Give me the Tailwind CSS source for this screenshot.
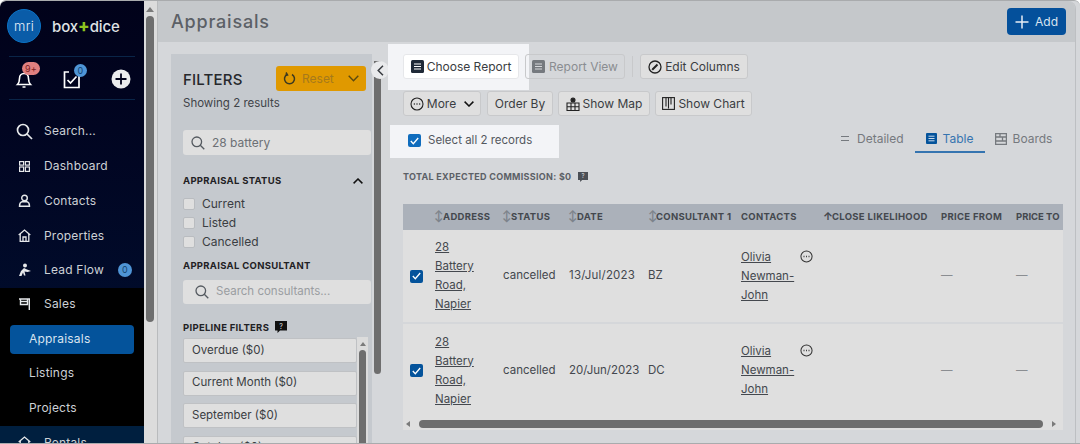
<!DOCTYPE html>
<html lang="en">
  <head>
    <meta charset="UTF-8" />
    <title>Appraisals</title>
    <script src="https://cdn.jsdelivr.net/npm/@tailwindcss/browser@4"></script>
  </head>
  <body class="bg-white font-['Inter',sans-serif] text-[#3a3d42] overflow-hidden">
    <div class="w-[1080px] h-[444px] flex overflow-hidden rounded-t-[6px] border-y border-[#a9abad] bg-[#d5d7da]">
      <!-- sidebar -->
      <nav class="w-[144px] h-[442px] shrink-0 overflow-hidden rounded-tl-[6px] bg-gradient-to-b from-[#01021a] to-[#001233] text-[#cdd1d6] text-[12px] tracking-[0.2px]">
        <div class="h-[55px] mx-[7px] pt-[8px] flex items-start">
          <div class="w-[34px] h-[34px] rounded-full bg-[#0a5ca8] border border-[#0b72c4] flex items-center justify-center text-[#e8f0f8] text-[13px] font-light leading-none">mri</div>
          <div class="ml-[11px] mt-[9px] text-[15px] leading-[18px] font-medium text-[#dfe1e4] tracking-[-0.1px] whitespace-nowrap">box<span class="text-[#8dc21f] font-extrabold text-[17px] leading-[17px]">+</span>dice</div>
        </div>
        <div class="mx-[9px] h-[44px] border-y border-[#0a2548] relative flex items-center">
          <svg class="absolute left-[6px] top-[12px] w-[18px] h-[20px]" viewBox="0 0 18 20" fill="none" stroke="#fff" stroke-width="1.6"><path d="M2.5 15.5c1.5-1.5 2-3 2-6 0-3 2-5 4.500-5s4.500 2 4.500 5c0 3 .5 4.500 2 6z"/><path d="M7.500 18h3"/></svg>
          <span class="absolute left-[13px] top-[5px] h-[13px] w-[18px] rounded-full bg-[#e08080] text-[#7d2020] text-[9px] leading-[13px] text-center">9+</span>
          <svg class="absolute left-[54px] top-[13px] w-[18px] h-[19px]" viewBox="0 0 18 19" fill="none" stroke="#fff" stroke-width="1.700"><path d="M6 2H1.500v15.500h14.500V4"/><path d="M4.500 10l3 3 6-6.500"/></svg>
          <span class="absolute left-[65px] top-[7px] h-[13px] w-[13px] rounded-full bg-[#4f95d6] text-[#14446f] text-[9px] leading-[13px] text-center">0</span>
          <svg class="absolute left-[102px] top-[12px] w-[20px] h-[20px]" viewBox="0 0 20 20"><circle cx="10" cy="10" r="9.500" fill="#eceded"/><path d="M10 4.500v11M4.500 10h11" stroke="#01021a" stroke-width="1.800"/></svg>
        </div>
        <div class="mt-[14px]">
          <a class="h-[34.750px] flex items-center pl-[16px]">
            <svg class="w-[17px] h-[17px] shrink-0" viewBox="0 0 17 17" fill="none" stroke="#e6e8ea" stroke-width="1.700"><circle cx="7" cy="7" r="5.500"/><path d="M11 11l5 5"/></svg>
            <span class="ml-[11px]">Search...</span>
          </a>
          <a class="h-[34.750px] flex items-center pl-[19px]">
            <svg class="w-[11px] h-[11px] shrink-0" viewBox="0 0 11 11" fill="none" stroke="#e6e8ea" stroke-width="1.200"><rect x=".6" y=".6" width="4" height="3.500"/><rect x="6.400" y=".6" width="4" height="3.500"/><rect x=".6" y="6" width="4" height="4.400"/><rect x="6.400" y="6" width="4" height="4.400"/></svg>
            <span class="ml-[14px]">Dashboard</span>
          </a>
          <a class="h-[34.750px] flex items-center pl-[18px]">
            <svg class="w-[13px] h-[13px] shrink-0" viewBox="0 0 13 13" fill="none" stroke="#e6e8ea" stroke-width="1.400"><circle cx="6.500" cy="4" r="2.800"/><path d="M1.500 12.200c0-3 1.500-4.200 2.500-4.500h5c1 .3 2.500 1.500 2.500 4.500z"/></svg>
            <span class="ml-[13px]">Contacts</span>
          </a>
          <a class="h-[34.750px] flex items-center pl-[18px]">
            <svg class="w-[13px] h-[13px] shrink-0" viewBox="0 0 13 13" fill="none" stroke="#e6e8ea" stroke-width="1.300"><path d="M.7 6L6.500 1l5.800 5"/><path d="M2.200 5v7.300h8.600V5"/><path d="M5 12.300V8h3v4.300"/></svg>
            <span class="ml-[13px]">Properties</span>
          </a>
          <a class="h-[34.750px] flex items-center pl-[18px]">
            <svg class="w-[14px] h-[14px] shrink-0" viewBox="0 0 14 14" fill="#e6e8ea"><circle cx="7" cy="2.500" r="2"/><path d="M1 13l2-5 3-3 3 1.500 4 1.500-3.500 1-3-.5 1 4H6l-1-3-1.500 3.500z"/></svg>
            <span class="ml-[12px]">Lead Flow</span>
            <span class="ml-[14px] w-[14px] h-[14px] rounded-full bg-[#4f95d6] text-[#14446f] text-[9px] leading-[14px] text-center">0</span>
          </a>
          <div class="bg-black h-[138px]">
            <a class="h-[32px] flex items-center pl-[19px]">
              <svg class="w-[11px] h-[12px] shrink-0" viewBox="0 0 11 12" fill="none" stroke="#e6e8ea" stroke-width="1.400"><path d="M0 1h10.300v11"/><path d="M1.500 1v5.500h7V1" /><path d="M1.500 3.500h7" /></svg>
              <span class="ml-[14px]">Sales</span>
            </a>
            <a class="h-[29px] mx-[10px] mt-[5px] pl-[19px] flex items-center rounded-[4px] bg-[#04539b] text-[#d9e4f0]">Appraisals</a>
            <a class="h-[35px] mt-[2px] pl-[29px] flex items-center">Listings</a>
            <a class="h-[34px] pl-[29px] flex items-center">Projects</a>
          </div>
          <a class="h-[34px] flex items-center pl-[18px] bg-[#001f3f]">
            <svg class="w-[13px] h-[13px] shrink-0" viewBox="0 0 13 13" fill="none" stroke="#e6e8ea" stroke-width="1.300"><path d="M.7 6L6.500 1l5.800 5"/><path d="M2.200 5v7.300h8.600V5"/></svg>
            <span class="ml-[13px]">Rentals</span>
          </a>
        </div>
      </nav>

      <!-- page scrollbar -->
      <div class="w-[14px] h-[442px] shrink-0 bg-[#dcdcdc] border-r border-[#b9bbbd] flex flex-col items-center pr-[1px]">
        <div class="mt-[6px] w-0 h-0 border-x-[4px] border-x-transparent border-b-[5px] border-b-[#7a7a7a]"></div>
        <div class="mt-[4px] w-[8px] h-[306px] rounded-full bg-[#6e6e6e]"></div>
      </div>

      <!-- main -->
      <main class="w-[918px] h-[442px] shrink-0 overflow-hidden rounded-tr-[8px] border-r border-[#bdbfc2]">
        <header class="h-[41px] bg-[#c5c8cb] flex items-center justify-between pl-[13px] pr-[9px]">
          <h1 class="text-[18px] font-medium text-[#5c6066] tracking-[0.8px]">Appraisals</h1>
          <button class="w-[59px] h-[27px] rounded-[4px] bg-[#04509b] text-[#d9e4f0] text-[12px] flex items-center justify-center gap-[6px]">
            <svg class="w-[14px] h-[14px]" viewBox="0 0 14 14" stroke="#e6edf5" stroke-width="1.500"><path d="M7 .5v13M.5 7h13"/></svg>
            Add
          </button>
        </header>

        <div class="flex">
          <!-- filters -->
          <div class="relative w-[227px] h-[401px] shrink-0 pl-[13px] pt-[12px]">
            <aside class="w-[201px] h-[389px] overflow-hidden bg-[#c5c9ce] pl-[12px]">
              <div class="flex items-start justify-between pt-[12px] pr-[6px]">
                <div class="w-[93px] whitespace-nowrap">
                  <h2 class="mt-[5px] text-[15px] leading-[18px] font-medium text-[#26282c] tracking-[0.2px]">FILTERS</h2>
                  <p class="mt-[7px] text-[11.500px] leading-[14px] text-[#3f4348]">Showing 2 results</p>
                </div>
                <button class="w-[90px] shrink-0 h-[25px] rounded-[3px] bg-[#e09900] text-[#a6791c] text-[12px] flex items-center pl-[7px] pr-[7px]">
                  <svg class="w-[13px] h-[13px] shrink-0" viewBox="0 0 13 13" fill="none" stroke="#3d3a20" stroke-width="1.500"><path d="M4 2.500a5 5 0 1 0 5 0"/><path d="M3 .5l1.500 2.500-2.500.5" /></svg>
                  <span class="ml-[6px]">Reset</span>
                  <svg class="ml-auto w-[11px] h-[7px]" viewBox="0 0 11 7" fill="none" stroke="#5c4a10" stroke-width="1.400"><path d="M.7.7l4.800 5 4.800-5"/></svg>
                </button>
              </div>
              <div class="mt-[20px] h-[25px] w-[188px] rounded-[3px] bg-[#dfdfdf] flex items-center pl-[8px] text-[12px] text-[#6c7075]">
                <svg class="w-[14px] h-[14px] shrink-0" viewBox="0 0 14 14" fill="none" stroke="#555a60" stroke-width="1.300"><circle cx="5.800" cy="5.800" r="4.800"/><path d="M9.300 9.300l4 4"/></svg>
                <span class="ml-[7px]">28 battery</span>
              </div>
              <div class="mt-[19px] flex items-center justify-between pr-[9px]">
                <h3 class="text-[9.500px] leading-[14px] font-bold text-[#1f2124] tracking-[0.3px]">APPRAISAL STATUS</h3>
                <svg class="w-[10px] h-[6px]" viewBox="0 0 10 6" fill="none" stroke="#111" stroke-width="1.500"><path d="M.6 5.400L5 1l4.400 4.400"/></svg>
              </div>
              <ul class="mt-[6px] text-[12px] text-[#3a3d42]">
                <li class="h-[19px] flex items-center gap-[7px]"><span class="w-[12px] h-[12px] rounded-[2px] bg-[#dfdfdf] border border-[#b9bcc0]"></span>Current</li>
                <li class="h-[19px] flex items-center gap-[7px]"><span class="w-[12px] h-[12px] rounded-[2px] bg-[#dfdfdf] border border-[#b9bcc0]"></span>Listed</li>
                <li class="h-[19px] flex items-center gap-[7px]"><span class="w-[12px] h-[12px] rounded-[2px] bg-[#dfdfdf] border border-[#b9bcc0]"></span>Cancelled</li>
              </ul>
              <h3 class="mt-[8px] text-[9.500px] leading-[14px] font-bold text-[#1f2124] tracking-[0.3px]">APPRAISAL CONSULTANT</h3>
              <div class="mt-[7px] h-[24px] w-[188px] rounded-[3px] bg-[#dfdfdf] flex items-center pl-[12px] text-[11.500px] text-[#9a9da1]">
                <svg class="w-[14px] h-[14px] shrink-0" viewBox="0 0 14 14" fill="none" stroke="#555a60" stroke-width="1.300"><circle cx="5.800" cy="5.800" r="4.800"/><path d="M9.300 9.300l4 4"/></svg>
                <span class="ml-[7px]">Search consultants...</span>
              </div>
              <div class="mt-[17px] flex items-center gap-[6px]">
                <h3 class="text-[9.500px] leading-[14px] font-bold text-[#1f2124] tracking-[0.3px]">PIPELINE FILTERS</h3>
                <svg class="w-[12px] h-[12px] -mt-[3px]" viewBox="0 0 12 12"><path d="M0 0h12v9.500H5L2.500 12V9.500H0z" fill="#111"/><text x="6" y="7.500" font-size="7" fill="#ddd" text-anchor="middle" font-family="Inter">?</text></svg>
              </div>
              <div class="flex mt-[3px]">
                <div class="w-[174px] shrink-0 flex flex-col gap-[7.500px] text-[11.500px] text-[#3a3d42]">
                  <button class="h-[25px] rounded-[2px] bg-[#dfdfdf] border border-[#bfc1c4] pl-[8px] text-left">Overdue ($0)</button>
                  <button class="h-[25px] rounded-[2px] bg-[#dfdfdf] border border-[#bfc1c4] pl-[8px] text-left">Current Month ($0)</button>
                  <button class="h-[25px] rounded-[2px] bg-[#dfdfdf] border border-[#bfc1c4] pl-[8px] text-left">September ($0)</button>
                  <button class="h-[25px] rounded-[2px] bg-[#dfdfdf] border border-[#bfc1c4] pl-[8px] text-left">October ($0)</button>
                </div>
                <div class="w-[11px] -mt-[1px] h-[110px] bg-[#dcdcdc] flex flex-col items-center">
                  <div class="mt-[5px] w-0 h-0 border-x-[3px] border-x-transparent border-b-[4px] border-b-[#7a7a7a]"></div>
                  <div class="mt-[4px] w-[7px] flex-1 rounded-full bg-[#6e6e6e]"></div>
                </div>
              </div>
            </aside>
            <!-- collapse + filter scrollbar -->
            <div class="absolute left-[216px] top-[19px] w-[7px] h-[313px] rounded-b-full bg-[#6e6e6e]"></div>
            <div class="absolute left-[213px] top-[19px] w-[18px] h-[18px] rounded-full bg-[#e9eaec] flex items-center justify-center">
              <svg class="w-[7px] h-[11px]" viewBox="0 0 7 11" fill="none" stroke="#3a3d42" stroke-width="1.500"><path d="M6 .7L1.200 5.500 6 10.300"/></svg>
            </div>
          </div>

          <!-- content -->
          <section class="relative w-[690px] pl-[18px] pt-[12px] text-[12px]">
            <!-- highlights sit behind the spotlighted controls -->
            <div class="absolute left-[3px] top-[2px] w-[141px] h-[46px] bg-[#f3f4f7]"></div>
            <div class="absolute left-[5px] top-[83px] w-[169px] h-[33px] bg-[#f3f4f7]"></div>

            <div class="relative flex items-center h-[25px]">
              <button class="w-[116px] h-full rounded-[3px] bg-white border border-[#e6e7ea] flex items-center justify-center gap-[3px] text-[#3a3d42]">
                <svg class="w-[13px] h-[13px]" viewBox="0 0 13 13"><rect width="13" height="13" rx="1.500" fill="#1f2937"/><path d="M3 4h7M3 6.500h7M3 9h7" stroke="#fff" stroke-width="1.100"/></svg>
                Choose Report
              </button>
              <button class="ml-[6px] w-[100px] h-full rounded-[3px] border border-[#c8c9cb] flex items-center justify-center gap-[4px] text-[#8a8d91]">
                <svg class="w-[13px] h-[13px]" viewBox="0 0 13 13"><rect width="13" height="13" rx="1.500" fill="#75797e"/><path d="M3 4h7M3 6.500h7M3 9h7" stroke="#d5d7da" stroke-width="1.100"/></svg>
                Report View
              </button>
              <span class="ml-[7px] w-px h-[21px] bg-[#c8c9cb]"></span>
              <button class="ml-[7px] w-[108px] h-full rounded-[3px] bg-[#dfdfdf] border border-[#c8c9cb] flex items-center justify-center gap-[3px]">
                <svg class="w-[14px] h-[14px]" viewBox="0 0 14 14" fill="none" stroke="#222" stroke-width="1.300"><circle cx="7" cy="7" r="6"/><path d="M4.500 9.500L9.500 4.500M4.500 9.500l-.3.4" stroke-width="2"/></svg>
                Edit Columns
              </button>
            </div>

            <div class="mt-[12px] flex h-[25px] gap-[5px]">
              <button class="w-[78px] rounded-[3px] bg-[#dfdfdf] border border-[#c8c9cb] flex items-center justify-center gap-[3px]">
                <svg class="w-[14px] h-[14px]" viewBox="0 0 14 14" fill="none" stroke="#222" stroke-width="1.100"><circle cx="7" cy="7" r="6"/><path d="M3.800 7h1M6.500 7h1M9.200 7h1" stroke-width="1.500"/></svg>
                More
                <svg class="ml-[5px] w-[10px] h-[6px]" viewBox="0 0 10 6" fill="none" stroke="#111" stroke-width="1.500"><path d="M.6.6L5 5l4.400-4.400"/></svg>
              </button>
              <button class="ml-[1px] w-[66px] rounded-[3px] bg-[#dfdfdf] border border-[#c8c9cb]">Order By</button>
              <button class="w-[92px] rounded-[3px] bg-[#dfdfdf] border border-[#c8c9cb] flex items-center justify-center gap-[3px]">
                <svg class="w-[14px] h-[14px]" viewBox="0 0 14 14" fill="none" stroke="#222" stroke-width="1.100"><path d="M1 6h12v7.500H1zM5 6v7.500M9 6v7.500M1 9.700h12"/><circle cx="7" cy="3" r="2" fill="#222"/></svg>
                Show Map
              </button>
              <button class="w-[97px] rounded-[3px] bg-[#dfdfdf] border border-[#c8c9cb] flex items-center justify-center gap-[3px]">
                <svg class="w-[13px] h-[13px]" viewBox="0 0 13 13" fill="none" stroke="#222" stroke-width="1.100"><rect x=".6" y=".6" width="11.800" height="11.800"/><path d="M4 .6v9M6.500 .6v11M9 .6v7"/></svg>
                Show Chart
              </button>
            </div>

            <div class="relative mt-[8px] h-[33px] flex items-center">
              <label class="flex items-center gap-[7px] ml-[5px] text-[11.500px] text-[#54585e]">
                <span class="w-[13px] h-[13px] rounded-[2px] bg-[#0f6cbd] flex items-center justify-center">
                  <svg class="w-[9px] h-[8px]" viewBox="0 0 9 8" fill="none" stroke="#fff" stroke-width="1.300"><path d="M.8 4l2.500 2.700L8.200 1"/></svg>
                </span>
                Select all 2 records
              </label>
              <div class="absolute left-[438px] top-0 h-[29px] flex items-center text-[#75797e]">
                <svg class="w-[8px] h-[5px]" viewBox="0 0 8 5" stroke="#75797e"><path d="M0 .5h8M0 4.500h8"/></svg>
                <span class="ml-[8px]">Detailed</span>
                <span class="ml-[11px] w-[70px] h-full flex items-center justify-center gap-[6px] border-b-2 border-[#3574b0] text-[#3574b0] pt-[2px]">
                  <svg class="w-[11px] h-[11px]" viewBox="0 0 11 11"><rect width="11" height="11" rx="1" fill="#04539b"/><path d="M2.500 3.200h6M2.500 5.500h6M2.500 7.800h6" stroke="#c9d9ea"/></svg>
                  Table
                </span>
                <svg class="ml-[10px] w-[12px] h-[12px]" viewBox="0 0 12 12" fill="none" stroke="#75797e" stroke-width="1.300"><rect x=".6" y=".6" width="10.800" height="10.800"/><path d="M.6 4h10.800M.6 8h10.800M5 .6V4M7.500 4v4"/></svg>
                <span class="ml-[6px]">Boards</span>
              </div>
            </div>

            <div class="mt-[13px] flex items-center gap-[6px] h-[14px]">
              <span class="text-[9px] font-bold text-[#5c6066] tracking-[0.3px]">TOTAL EXPECTED COMMISSION: $0</span>
              <svg class="w-[10px] h-[10px]" viewBox="0 0 12 12"><path d="M0 0h12v9.500H5L2.500 12V9.500H0z" fill="#4b4f55"/><text x="6" y="7.500" font-size="7" fill="#ddd" text-anchor="middle" font-family="Inter">?</text></svg>
            </div>

            <div class="mt-[20px] w-[660px]">
              <table class="w-[660px] table-fixed border-separate border-spacing-0 text-left">
                <colgroup>
                  <col class="w-[32px]" /><col class="w-[68px]" /><col class="w-[66px]" /><col class="w-[79px]" /><col class="w-[93px]" /><col class="w-[82px]" /><col class="w-[118px]" /><col class="w-[75px]" /><col class="w-[47px]" />
                </colgroup>
                <thead>
                  <tr class="h-[26px] bg-[#abb1ba] text-[9.500px] font-bold text-[#44484e] tracking-[0.3px] whitespace-nowrap">
                    <th></th>
                    <th class="font-bold"><span class="inline-block w-[9px] -ml-[1px] text-[#7d838b] text-[11px] leading-none">↕</span>ADDRESS</th>
                    <th class="font-bold"><span class="inline-block w-[9px] -ml-[1px] text-[#7d838b] text-[11px] leading-none">↕</span>STATUS</th>
                    <th class="font-bold"><span class="inline-block w-[9px] -ml-[1px] text-[#7d838b] text-[11px] leading-none">↕</span>DATE</th>
                    <th class="font-bold"><span class="inline-block w-[8px] text-[#7d838b] text-[11px] leading-none">↕</span>CONSULTANT 1</th>
                    <th class="font-bold">CONTACTS</th>
                    <th class="font-bold"><span class="inline-block w-[9px] text-[11px] leading-none">↑</span>CLOSE LIKELIHOOD</th>
                    <th class="font-bold">PRICE FROM</th>
                    <th class="font-bold tracking-normal">PRICE TO</th>
                  </tr>
                </thead>
                <tbody class="text-[11.500px] text-[#44484e]">
                  <tr class="h-[94px] bg-[#dfdfdf]">
                    <td class="pl-[7px] border-b-2 border-[#d5d7da]">
                      <span class="w-[13px] h-[13px] rounded-[2px] bg-[#04539b] flex items-center justify-center"><svg class="w-[9px] h-[8px]" viewBox="0 0 9 8" fill="none" stroke="#fff" stroke-width="1.300"><path d="M.8 4l2.500 2.700L8.200 1"/></svg></span>
                    </td>
                    <td class="border-b-2 border-[#d5d7da] leading-[19px] underline">28<br />Battery<br />Road,<br />Napier</td>
                    <td class="border-b-2 border-[#d5d7da]">cancelled</td>
                    <td class="border-b-2 border-[#d5d7da] tracking-[0.2px]">13/Jul/2023</td>
                    <td class="border-b-2 border-[#d5d7da]">BZ</td>
                    <td class="border-b-2 border-[#d5d7da]">
                      <div class="flex items-start gap-[3px] leading-[19px]">
                        <span class="underline w-[56px]">Olivia<br />Newman-<br />John</span>
                        <svg class="w-[13px] h-[13px] mt-[2px] shrink-0" viewBox="0 0 14 14" fill="none" stroke="#333" stroke-width="1.100"><circle cx="7" cy="7" r="6"/><path d="M3.800 7h1M6.500 7h1M9.200 7h1" stroke-width="1.500"/></svg>
                      </div>
                    </td>
                    <td class="border-b-2 border-[#d5d7da]"></td>
                    <td class="border-b-2 border-[#d5d7da] text-[#8a8d91]">—</td>
                    <td class="border-b-2 border-[#d5d7da] text-[#8a8d91]">—</td>
                  </tr>
                  <tr class="h-[93px] bg-[#dfdfdf]">
                    <td class="pl-[7px]">
                      <span class="w-[13px] h-[13px] rounded-[2px] bg-[#04539b] flex items-center justify-center"><svg class="w-[9px] h-[8px]" viewBox="0 0 9 8" fill="none" stroke="#fff" stroke-width="1.300"><path d="M.8 4l2.500 2.700L8.200 1"/></svg></span>
                    </td>
                    <td class="leading-[19px] underline">28<br />Battery<br />Road,<br />Napier</td>
                    <td>cancelled</td>
                    <td>20/Jun/2023</td>
                    <td>DC</td>
                    <td>
                      <div class="flex items-start gap-[3px] leading-[19px]">
                        <span class="underline w-[56px]">Olivia<br />Newman-<br />John</span>
                        <svg class="w-[13px] h-[13px] mt-[2px] shrink-0" viewBox="0 0 14 14" fill="none" stroke="#333" stroke-width="1.100"><circle cx="7" cy="7" r="6"/><path d="M3.800 7h1M6.500 7h1M9.200 7h1" stroke-width="1.500"/></svg>
                      </div>
                    </td>
                    <td></td>
                    <td class="text-[#8a8d91]">—</td>
                    <td class="text-[#8a8d91]">—</td>
                  </tr>
                </tbody>
              </table>
              <!-- horizontal scrollbar -->
              <div class="h-[13px] bg-[#dfdfdf] flex items-center pl-[3px] pr-[7px] gap-[9px]">
                <div class="w-0 h-0 border-y-[3px] border-y-transparent border-r-[4px] border-r-[#7a7a7a]"></div>
                <div class="flex-1 h-[8px] rounded-full bg-[#6e6e6e]"></div>
                <div class="w-0 h-0 border-y-[3px] border-y-transparent border-l-[4px] border-l-[#7a7a7a]"></div>
              </div>
            </div>
          </section>
        </div>
      </main>
    </div>
  </body>
</html>
